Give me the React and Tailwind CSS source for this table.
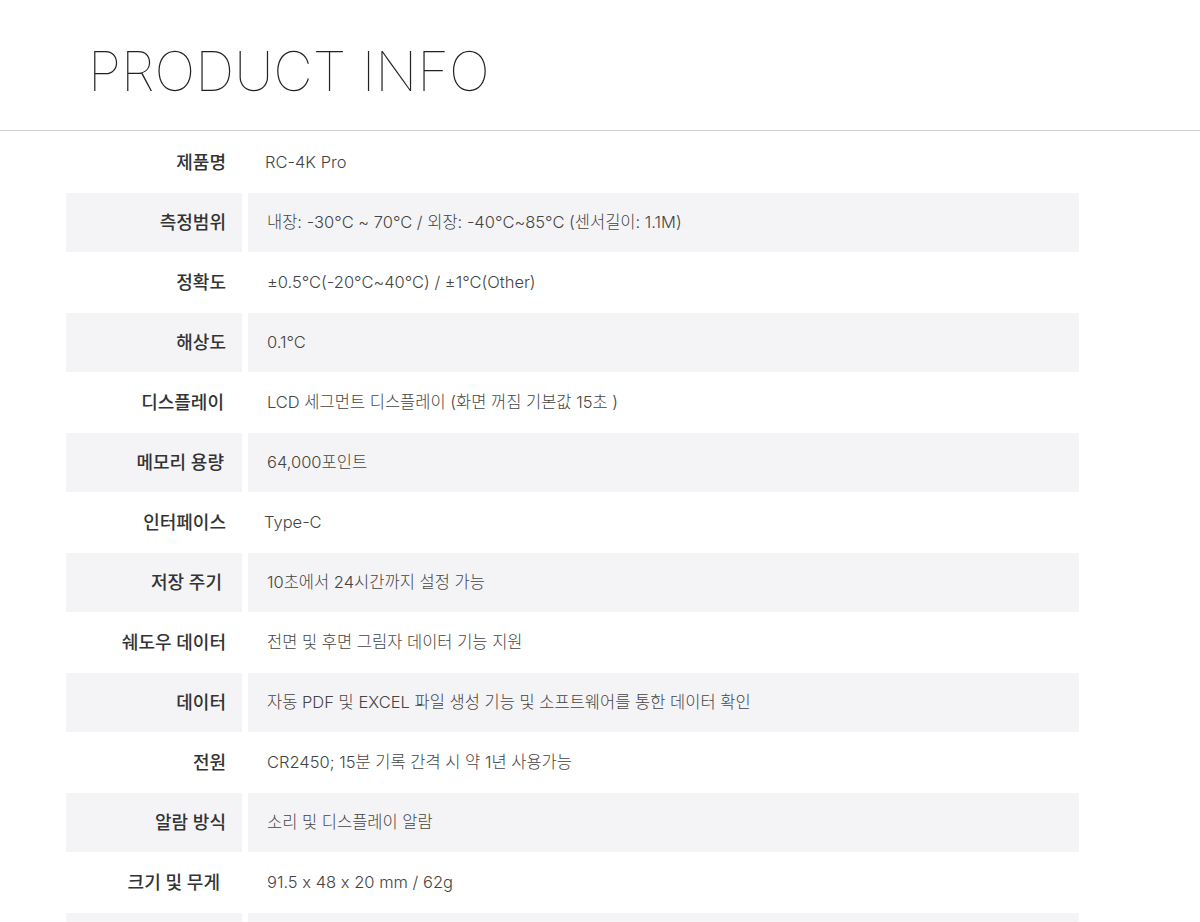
const rows = [
  { label: "제품명", value: "RC-4K Pro", vx: "pl-[17px]" },
  { label: "측정범위", value: "내장: -30°C ~ 70°C / 외장: -40°C~85°C (센서길이: 1.1M)" },
  { label: "정확도", value: "±0.5°C(-20°C~40°C) / ±1°C(Other)" },
  { label: "해상도", value: "0.1°C" },
  { label: "디스플레이", value: "LCD 세그먼트 디스플레이 (화면 꺼짐 기본값 15초 )", lx: "pr-[18px]" },
  { label: "메모리 용량", value: "64,000포인트", lx: "pr-[18px]" },
  { label: "인터페이스", value: "Type-C", vx: "pl-[16px]" },
  { label: "저장 주기", value: "10초에서 24시간까지 설정 가능", lx: "pr-[20px]" },
  { label: "쉐도우 데이터", value: "전면 및 후면 그림자 데이터 기능 지원" },
  { label: "데이터", value: "자동 PDF 및 EXCEL 파일 생성 기능 및 소프트웨어를 통한 데이터 확인" },
  { label: "전원", value: "CR2450; 15분 기록 간격 시 약 1년 사용가능" },
  { label: "알람 방식", value: "소리 및 디스플레이 알람" },
  { label: "크기 및 무게", value: "91.5 x 48 x 20 mm / 62g", lx: "pr-[22px]" },
  { label: "", value: "" },
]

export default function App() {
  return (
    <div className="min-h-screen bg-white font-['Inter','Noto_Sans_CJK_KR',sans-serif] [font-feature-settings:'calt'_0]">
      <div className="h-[131px] border-b border-[#cccccc] pl-[88px] pt-[35px]">
        <h1 className="text-[54.5px] font-thin leading-[72px] text-[#222]">PRODUCT INFO</h1>
      </div>
      <div className="flex flex-col gap-px pt-[2px] pl-[66px] w-[1079px]">
        {rows.map((r, i) => (
          <div key={i} className="grid grid-cols-[176px_831px] gap-[6px] h-[59px]">
            <div
              className={`flex items-center justify-end ${r.lx || "pr-4"} text-[18px] font-medium text-[#333] ${
                i % 2 ? "bg-[#f4f4f6]" : ""
              }`}
            >
              {r.label}
            </div>
            <div
              className={`flex items-center ${r.vx || "pl-[19px]"} text-[16.5px] font-light text-[#444] ${
                i % 2 ? "bg-[#f4f4f6]" : ""
              }`}
            >
              {r.value}
            </div>
          </div>
        ))}
      </div>
    </div>
  )
}
